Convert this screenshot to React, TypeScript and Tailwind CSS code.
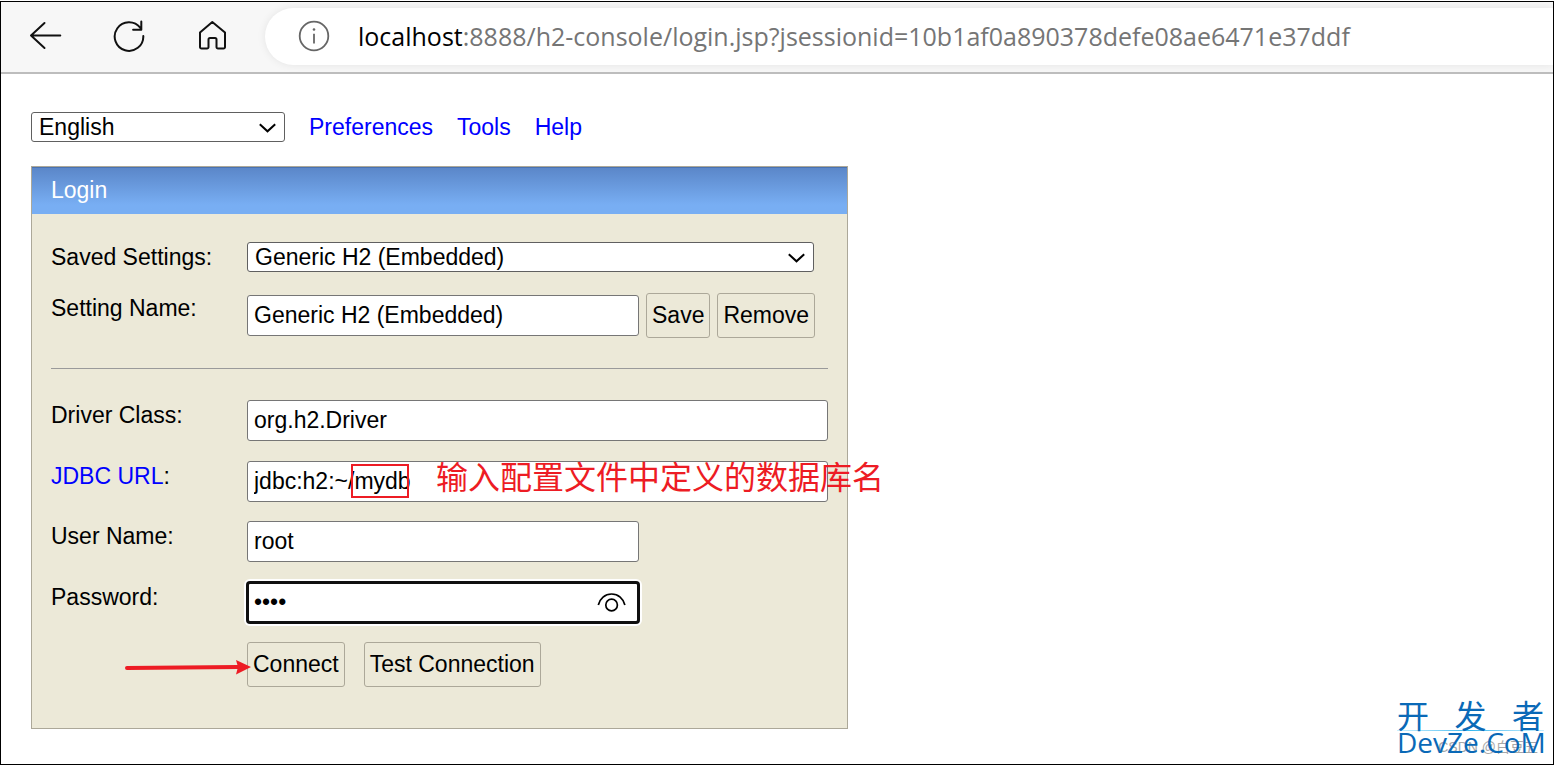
import type { ComponentProps, ReactNode } from "react";

const fieldClass =
  "block h-[41px] rounded-[3px] border border-[#767676] bg-white px-1.5 leading-[27px] text-black outline-none";

function Select({ children, className, ...props }: ComponentProps<"select">) {
  return (
    <div className={className}>
      <div className="relative">
        <select
          {...props}
          className="block h-[30px] w-full appearance-none rounded-[3px] border border-[#606060] bg-white pl-[7px] pr-10 leading-[27px] text-black outline-none"
        >
          {children}
        </select>
        <svg
          viewBox="0 0 18 10"
          className="pointer-events-none absolute right-2 top-[11px] h-[10px] w-[18px]"
          fill="none"
          stroke="#000"
          strokeWidth="2"
        >
          <path d="M.8 1.2 8.500 8.300l7.700-7.100" />
        </svg>
      </div>
    </div>
  );
}

function Button({ children }: { children: ReactNode }) {
  return (
    <button
      type="button"
      className="h-[45px] rounded-[3px] border border-[#aca899] bg-[#ece9d8] px-[5px] text-black"
    >
      {children}
    </button>
  );
}

function Row({ label, children }: { label: ReactNode; children: ReactNode }) {
  return (
    <div className="flex items-start">
      <div className="w-[196px] shrink-0 pt-0.5">{label}</div>
      {children}
    </div>
  );
}

function Toolbar() {
  return (
    <header className="flex items-start border-b-2 border-[#bdbdbd] bg-[#f7f7f7] pt-1.5 pb-[7px]">
      <nav className="flex h-[57px] items-center pb-0.5 pl-[27px]">
        <button type="button" aria-label="Back" className="w-[84px]">
          <svg viewBox="0 0 34 34" className="h-[34px] w-[34px]" fill="none" stroke="#111" strokeWidth="2" strokeLinecap="round" strokeLinejoin="round">
            <path d="M3 16.500h29.300M16.500 4 3 16.500 16.500 29" />
          </svg>
        </button>
        <button type="button" aria-label="Refresh" className="w-[83px]">
          <svg viewBox="0 0 34 34" className="h-[34px] w-[34px]" fill="none" stroke="#111" strokeWidth="2" strokeLinecap="round" strokeLinejoin="round">
            <path d="M31.300 17A14.300 14.300 0 1 1 28.400 8.900M29.300 2.500v8.200h-8.200" />
          </svg>
        </button>
        <button type="button" aria-label="Home" className="w-[70px]">
          <svg viewBox="0 0 34 34" className="h-[34px] w-[34px]" fill="none" stroke="#111" strokeWidth="2" strokeLinejoin="round">
            <path d="M5 13.500 17.300 3l12.700 10.500V28a1.500 1.500 0 0 1-1.500 1.500H23A1.500 1.500 0 0 1 21.500 28v-7.500a1.500 1.500 0 0 0-1.500-1.500h-5a1.500 1.500 0 0 0-1.500 1.500V28a1.500 1.500 0 0 1-1.500 1.500H6.500A1.500 1.500 0 0 1 5 28Z" />
          </svg>
        </button>
      </nav>
      <div className="flex h-[57px] flex-1 items-center rounded-l-full bg-white pb-0.5 pl-8 shadow-[0_0_8px_rgba(0,0,0,0.08)]">
        <svg viewBox="0 0 34 34" className="h-[34px] w-[34px] shrink-0" fill="none" stroke="#666" strokeWidth="1.8">
          <circle cx="17" cy="17" r="14.300" />
          <path d="M17 14.800v9.700" />
          <circle cx="17" cy="10.500" r="1.300" fill="#666" stroke="none" />
        </svg>
        <div className="whitespace-nowrap pl-[27px] font-['Open_Sans','Noto_Sans',sans-serif] text-[25px] leading-8 text-[#757575]">
          <span className="text-black">localhost</span>
          :8888/h2-console/login.jsp?jsessionid=10b1af0a890378defe08ae6471e37ddf
        </div>
      </div>
    </header>
  );
}

function LoginForm() {
  return (
    <form className="mt-6 w-fit border border-[#aca899] bg-[#ece9d8]">
      <h1 className="h-[47px] border-t border-[#4a72b0] bg-linear-to-b from-[#5b87c9] to-[#78aef3] to-80% px-[19px] pt-[9px] text-white">
        Login
      </h1>
      <div className="px-[19px] pt-7 pb-[41px]">
        <Row label={<label htmlFor="setting">Saved Settings:</label>}>
          <Select id="setting" className="w-[567px]">
            <option>Generic H2 (Embedded)</option>
          </Select>
        </Row>
        <div className="mt-[21px]">
          <Row label={<label htmlFor="name">Setting Name:</label>}>
            <div className="flex items-center gap-[7px]">
              <input id="name" className={`${fieldClass} w-[392px]`} defaultValue="Generic H2 (Embedded)" />
              <Button>Save</Button>
              <Button>Remove</Button>
            </div>
          </Row>
        </div>
        <hr className="mt-[30px] mb-[31px] border-[#9a9a9a]" />
        <div className="flex flex-col gap-[19px]">
          <div className="flex flex-col gap-5">
            <Row label={<label htmlFor="driver">Driver Class:</label>}>
              <input id="driver" className={`${fieldClass} w-[581px]`} defaultValue="org.h2.Driver" />
            </Row>
            <Row
              label={
                <label htmlFor="url">
                  <a href="#url" className="text-[#0000ff]">JDBC URL</a>:
                </label>
              }
            >
              <div className="relative">
                <input id="url" className={`${fieldClass} w-[581px]`} defaultValue="jdbc:h2:~/mydb" />
                <span className="pointer-events-none absolute left-[104px] top-[3px] h-[34px] w-[58px] border-2 border-[#ed1c24]" />
                <span className="pointer-events-none absolute -top-0.5 left-[189px] whitespace-nowrap font-['KaiTi','Noto_Sans_CJK_SC',sans-serif] text-[32px] leading-8 text-[#ed1c24]">
                  输入配置文件中定义的数据库名
                </span>
              </div>
            </Row>
          </div>
          <div className="flex flex-col gap-5">
            <Row label={<label htmlFor="user">User Name:</label>}>
              <input id="user" className={`${fieldClass} w-[392px]`} defaultValue="root" />
            </Row>
            <Row label={<label htmlFor="password">Password:</label>}>
              <div className="relative">
                <input
                  id="password"
                  type="password"
                  className="block h-[41px] w-[392px] rounded-[3px] border-2 border-[#101010] bg-white pl-[5px] pr-12 text-black shadow-[0_0_0_1px_#101010,0_0_0_3px_#fff] outline-none"
                  defaultValue="root"
                />
                <button type="button" aria-label="Show password" className="absolute right-3 top-[9px]">
                  <svg viewBox="0 0 30 22" className="h-[22px] w-[30px]" fill="none" stroke="#000" strokeWidth="1.700">
                    <path d="M1.300 14C2.800 7.500 8 3 14.600 3s11.800 4.500 13.300 11" />
                    <circle cx="14.600" cy="14" r="5.800" />
                  </svg>
                </button>
              </div>
            </Row>
          </div>
          <Row label="">
            <div className="relative flex gap-[19px]">
              <Button>Connect</Button>
              <Button>Test Connection</Button>
              <svg viewBox="0 0 128 16" className="pointer-events-none absolute -left-[123px] top-[17px] h-4 w-32">
                <path d="M3 9 114 8" stroke="#ed1c24" strokeWidth="4" strokeLinecap="round" />
                <path d="M112 1 127 8l-15 7.500 2-7.500Z" fill="#ed1c24" />
              </svg>
            </div>
          </Row>
        </div>
      </div>
    </form>
  );
}

function Watermark() {
  return (
    <div className="absolute right-[9px] bottom-[11px] w-[147px] text-[#0a69b7]">
      <div className="flex justify-between font-['Noto_Sans_CJK_SC',sans-serif] text-[32px] leading-8">
        <span>开</span>
        <span>发</span>
        <span>者</span>
      </div>
      <div className="h-px bg-linear-to-r from-[#c8f0ff] via-[#35b8ee] to-[#c8f0ff]" />
      <div className="absolute right-1.5 -bottom-1 whitespace-nowrap font-['Liberation_Sans','Noto_Sans_CJK_SC',sans-serif] text-[14px] leading-5 text-[#a8a8a8]">
        CSDN @白豆五
      </div>
      <div className="relative font-['Open_Sans','Noto_Sans',sans-serif] text-[28px] leading-[22px]">DevZe.CoM</div>
    </div>
  );
}

export default function App() {
  return (
    <div className="flex min-h-screen flex-col bg-white pt-px font-['Liberation_Sans',Arial,sans-serif] text-[23px] leading-[27px] text-black">
      <div className="relative flex-1 border border-black">
        <Toolbar />
        <main className="px-[30px] pt-[38px] pb-8">
          <div className="flex items-center gap-6">
            <Select aria-label="Language" className="w-[254px]">
              <option>English</option>
            </Select>
            <a href="#preferences" className="text-[#0000ff]">Preferences</a>
            <a href="#tools" className="text-[#0000ff]">Tools</a>
            <a href="#help" className="text-[#0000ff]">Help</a>
          </div>
          <LoginForm />
        </main>
        <Watermark />
      </div>
    </div>
  );
}
